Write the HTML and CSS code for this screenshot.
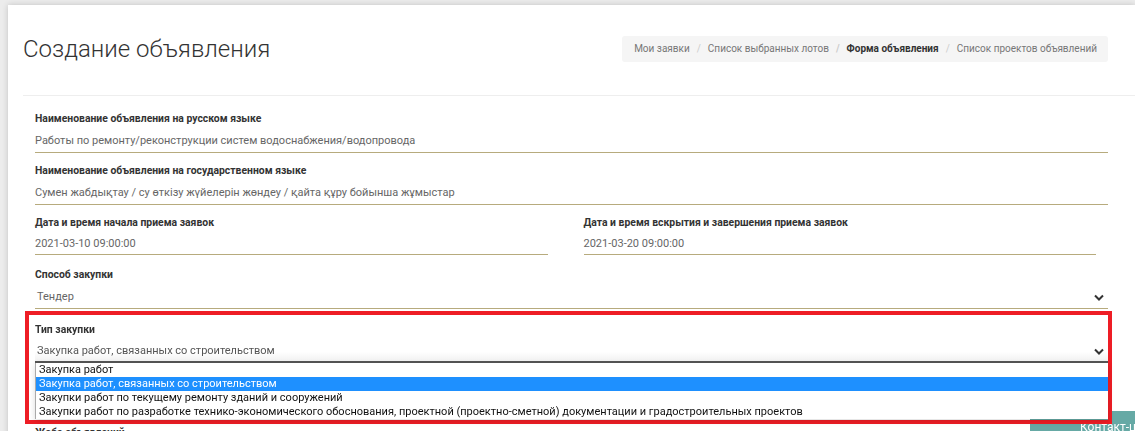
FILE: index.html
```html
<html>

<head>
    <meta charset="utf-8">
    <link rel="stylesheet" href="styles.css">
</head>

<body>
    <div class="page">
        <div class="card">
            <div class="card-head">
                <h1 class="card-head__title">Создание объявления</h1>
                <ol class="crumbs">
                    <li>Мои заявки</li>
                    <li>Список выбранных лотов</li>
                    <li class="current">Форма объявления</li>
                    <li>Список проектов объявлений</li>
                </ol>
            </div>
            <div class="divider"></div>

            <form class="form">
                <div class="field">
                    <label>Наименование объявления на русском языке</label>
                    <div class="input">Работы по ремонту/реконструкции систем водоснабжения/водопровода</div>
                </div>
                <div class="field">
                    <label>Наименование объявления на государственном языке</label>
                    <div class="input">Сумен жабдықтау / су өткізу жүйелерін жөндеу / қайта құру бойынша жұмыстар</div>
                </div>
                <div class="row">
                    <div class="field">
                        <label>Дата и время начала приема заявок</label>
                        <div class="input">2021-03-10 09:00:00</div>
                    </div>
                    <div class="field">
                        <label>Дата и время вскрытия и завершения приема заявок</label>
                        <div class="input">2021-03-20 09:00:00</div>
                    </div>
                </div>
                <div class="field">
                    <label>Способ закупки</label>
                    <div class="input select">
                        <span>Тендер</span>
                        <svg class="chevron" width="10" height="7" viewBox="0 0 10 7"><polyline points="1,1.5 5,5.5 9,1.5" fill="none" stroke="#333" stroke-width="2"/></svg>
                    </div>
                </div>
                <!-- marked field, dropdown open -->
                <div class="field field--marked">
                    <label>Тип закупки</label>
                    <div class="input select select--open">
                        <span>Закупка работ, связанных со строительством</span>
                        <svg class="chevron" width="10" height="7" viewBox="0 0 10 7"><polyline points="1,1.5 5,5.5 9,1.5" fill="none" stroke="#333" stroke-width="2"/></svg>
                    </div>
                    <ul class="options">
                        <li>Закупка работ</li>
                        <li class="selected">Закупка работ, связанных со строительством</li>
                        <li>Закупки работ по текущему ремонту зданий и сооружений</li>
                        <li>Закупки работ по разработке технико-экономического обоснования, проектной (проектно-сметной) документации и градостроительных проектов</li>
                    </ul>
                </div>
                <div class="field field--last">
                    <label>Жоба объявлений</label>
                </div>
            </form>
        </div>
    </div>

    <a class="contact" href="#">Контакт-центр</a>
</body>

</html>
```

FILE: styles.css
```css
html,
body {
    margin: 0;
    height: 431px;
    overflow: hidden;
}

body {
    background: #ececec;
    font-family: Roboto, "Noto Sans", sans-serif;
    color: #333;
}

.page {
    padding: 5px 0 0 8px;
}

.card {
    background: #fff;
    box-shadow: 0 0 6px rgba(0, 0, 0, .18);
    padding: 29px 27px 0 15px;
    min-height: 500px;
}

.card-head {
    display: flex;
    justify-content: space-between;
    align-items: center;
}

.card-head__title {
    margin: 0;
    font-size: 24px;
    line-height: 30px;
    font-weight: 300;
    color: #333;
}

.crumbs {
    display: flex;
    list-style: none;
    margin: 0;
    padding: 0 11px 0 12px;
    height: 26px;
    line-height: 26px;
    background: #f5f5f5;
    border-radius: 3px;
    font-size: 10px;
    color: #777;
}

.crumbs li + li::before {
    content: "/";
    color: #ccc;
    padding: 0 7px;
}

.crumbs .current {
    font-weight: 700;
    color: #333;
}

.divider {
    height: 1px;
    background: #eee;
    margin: 31px -27px 0 0;
}

.form {
    padding: 16px 0 0 12px;
}

.field {
    margin-bottom: 11px;
}

.field label {
    display: block;
    font-size: 10.4px;
    line-height: 14px;
    font-weight: 700;
    color: #333;
    margin-bottom: 4px;
}

.input {
    height: 22px;
    line-height: 22px;
    font-size: 11px;
    color: #666;
    border-bottom: 1px solid #b7ab7d;
}

.row {
    display: grid;
    grid-template-columns: 1fr 1fr;
    gap: 36px;
    margin-right: 12px;
}

.row .input {
    height: 20px;
    line-height: 20px;
}

.row .field {
    margin-bottom: 13px;
}

.select {
    display: flex;
    justify-content: space-between;
    align-items: center;
    padding-left: 2px;
}

.chevron {
    margin-right: 4px;
}

.field--marked {
    position: relative;
    z-index: 2;
    margin: -9px -4px 0 -10px;
    padding: 8px 0 1px 6px;
    border: 4px solid #ee1d25;
}

.select--open {
    height: 20px;
    line-height: 20px;
    color: #555;
    border-bottom: 2px solid #555;
    background: linear-gradient(#fff 55%, #f1f1f1);
}

.options {
    list-style: none;
    margin: 0;
    padding: 0;
    border-left: 1px solid #aaa;
    background: #fff;
    box-shadow: 0 2px 6px rgba(0, 0, 0, .15);
    font-size: 11px;
    color: #111;
}

.options li {
    height: 14px;
    line-height: 14px;
    padding-left: 3px;
    white-space: nowrap;
}

.options .selected {
    background: #1e90ff;
    color: #fff;
}

.field--last {
    padding-top: 2px;
}

.contact {
    position: fixed;
    z-index: 1;
    left: 1030px;
    top: 411px;
    width: 130px;
    height: 30px;
    box-sizing: border-box;
    padding: 9px 0 0 50px;
    background: #66a9a5;
    color: #fff;
    font-size: 12px;
    text-decoration: none;
    white-space: nowrap;
}
```
